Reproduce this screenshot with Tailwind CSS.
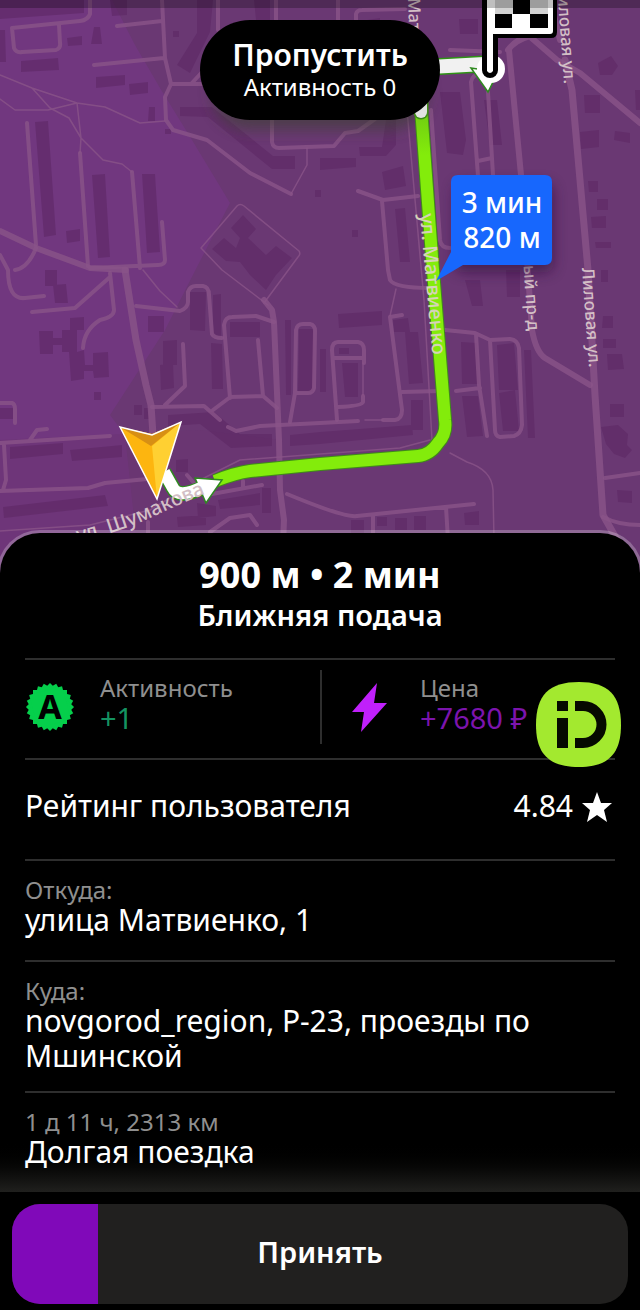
<!DOCTYPE html>
<html lang="ru">
<head>
  <meta charset="UTF-8" />
  <meta name="viewport" content="width=device-width, initial-scale=1.0"/>
  <title>Новый заказ</title>
  <script src="https://cdn.jsdelivr.net/npm/@tailwindcss/browser@4"></script>
</head>
<body class="bg-black text-white font-['Noto_Sans',sans-serif] min-h-screen flex flex-col">

  <!-- Map -->
  <header class="relative h-[573px] overflow-hidden bg-[#6a3873]">
    <svg class="absolute inset-0 w-full h-full" viewBox="0 0 640 573" preserveAspectRatio="xMidYMin slice" font-family="Noto Sans, sans-serif" role="img" aria-label="Карта маршрута">
      <defs>
        <path id="shumakova" d="M78 542 Q125 530 150 518 Q180 504 210 492" />
        <linearGradient id="routeFade" x1="0" y1="110" x2="0" y2="200" gradientUnits="userSpaceOnUse">
          <stop offset="0" stop-color="#6fcb12" />
          <stop offset="0.5" stop-color="#83ec0b" />
        </linearGradient>
        <filter id="soft" x="-30%" y="-30%" width="160%" height="170%"><feGaussianBlur stdDeviation="7" /></filter>
      </defs>
      <rect width="640" height="573" fill="#6a3873" />
      <path d="M0 0 H112 L135 45 L160 88 L192 140 L230 203 L198 265 L165 330 L110 415 L125 435 L140 573 H0 Z" fill="#71377f" />
      <path d="M0 440 L200 430 L280 440 V573 H0 Z" fill="#69336f" opacity="0.35" />

      <!-- Buildings -->
      <g fill="#5c2663" opacity="0.55">
        <path d="M0 0 H84 V13 L0 19 Z" />
        <path d="M0 30 H5 L6 62 H0 Z M67 38 L82 36 V45 L68 46 Z M94 27 H100 L102 44 H91 Z M21 61 L58 58 L59 70 L21 72 Z M96 77 L125 75 V85 L96 88 Z M129 84 L148 82 V93 L130 95 Z M149 107 H155 V121 H148 Z M110 0 H127 V15 L112 16 Z" />
        <path d="M35 122 L48 121 L56 235 L44 237 Z M92 175 L105 174 L110 257 L98 258 Z M142 174 L155 174 L160 252 L147 253 Z M66 231 L80 229 V241 L67 243 Z" />
        <path d="M173 31 H179 V37 H173 Z M165 129 H171 V134 H165 Z M197 0 H213 L210 32 L190 73 L177 65 L197 33 Z M254 0 H270 V20 H256 Z M180 107 H212 L273 156 H295 V169 H272 L208 117 L180 116 Z M315 190 H321 V197 H315 Z" />
        <path d="M243 215 L256 229 L248 238 L266 255 L276 246 L292 258 L276 275 L266 290 L250 275 L240 262 L226 261 L212 249 L224 238 L236 248 L240 238 L231 228 Z" />
        <path d="M45 270 H57 V286 H45 Z M53 285 L66 284 L68 303 H55 Z M39 331 H53 V338 H62 V330 H70 V318 L84 317 V330 H77 V352 L84 350 L85 365 H93 V353 L108 352 L109 377 L94 378 L93 371 H84 V379 L71 381 L69 352 H62 V345 H53 V354 H40 Z M94 392 H101 V400 H94 Z M0 408 H13 V419 H0 Z" />
        <path d="M148 316 H164 V332 H148 Z M163 341 L177 340 V365 H163 Z M160 365 L173 363 L174 388 L161 390 Z M190 292 H206 L205 331 L190 330 Z M213 295 L221 294 V338 L213 337 Z M211 343 L222 344 L223 389 H212 Z M230 322 H260 V337 H230 Z M285 320 H291 V395 H286 Z M299 329 H314 L313 392 H298 Z M134 405 H142 V415 H134 Z M144 408 H149 V419 H144 Z" />
        <path d="M10 447 L63 443 V454 L10 459 Z M70 450 L122 445 V457 L72 461 Z M176 460 L188 459 V472 H176 Z M168 415 L214 412 L240 434 H272 V446 L231 448 L200 424 L168 426 Z M290 435 L320 432 L412 425 L413 435 L320 444 L290 446 Z M3 507 L105 495 L108 506 L4 518 Z M218 500 L260 493 V505 L220 509 Z M177 517 L206 515 V525 L178 527 Z M197 503 L216 506 V516 L198 518 Z M262 488 H271 V513 H262 Z" />
        <path d="M367 20 L380 18 V32 L368 33 Z M459 19 H478 V34 H460 Z M440 92 H460 L466 140 L463 155 L447 153 Z M484 100 H497 L502 145 H490 Z M320 158 H356 V167 L320 170 Z M359 147 H382 L386 120 H396 V145 L386 156 H360 Z M382 172 L403 166 L406 186 L385 190 Z M352 230 H358 V237 H352 Z" />
        <path d="M395 209 L405 208 L410 262 H400 Z M580 132 L599 130 V147 L581 149 Z M615 131 L630 133 V143 L614 140 Z M584 95 H600 V113 H585 Z M598 63 L611 56 L618 66 L612 75 H600 Z M588 181 H598 V192 H589 Z M597 199 H608 V210 H597 Z M591 217 L606 216 V228 H592 Z M595 242 H611 V248 H596 Z M601 270 H608 V282 H601 Z M603 316 H613 V328 H602 Z M603 339 H616 V348 H603 Z M607 354 L622 354 L624 369 L608 370 Z M610 404 H624 V417 H610 Z M601 427 L618 425 L628 434 L627 445 L632 450 L625 458 L614 454 L606 444 Z M617 490 L632 491 V503 L618 502 Z M635 90 H640 V110 H636 Z" />
        <path d="M338 314 L382 311 V325 L339 328 Z M393 320 L408 318 L410 332 H394 Z M405 332 H418 L423 383 L409 384 Z M339 348 H349 V354 H339 Z M342 363 H358 V397 H345 Z M320 349 H326 V392 H320 Z M411 400 H423 V430 H411 Z M461 342 L477 343 L479 384 H462 Z M497 345 L514 343 L518 390 H499 Z M462 396 H478 L483 436 L467 437 Z M499 393 L515 390 L519 431 H503 Z M524 350 H531 L535 438 H528 Z M465 280 H480 L483 306 H472 Z M506 270 H520 V297 H507 Z M351 520 H364 V533 H351 Z M377 517 H387 V526 H377 Z M395 518 H407 V530 H395 Z M414 516 H426 V530 H414 Z M464 513 L479 511 V525 H465 Z" />
      </g>

      <!-- Streets -->
      <g fill="none" stroke="#8a5488" stroke-opacity="0.8" stroke-width="4" stroke-linejoin="round" stroke-linecap="round">
        <path d="M90 0 V14 Q88 20 80 21 L12 28 L14 48 Q16 53 22 52 L56 50 Q61 48 60 43 L59 25 M117 26 L162 21 M94 65 L164 58 M162 0 L165 58 L171 84 L165 97 L166 120 L173 130 L207 140 L250 173 L291 194 M171 84 H230 M191 84 L204 70 M218 0 V30 M276 0 V30" />
        <path d="M27 123 L36 245 M80 153 L88 266 M132 172 L140 268 M162 222 L165 260 Q165 265 158 265 L90 268 M36 248 Q28 268 15 270 M0 255 L8 270 Q8 300 25 298 L44 296" />
        <path d="M272 110 V142 Q273 148 279 148 L334 146 L345 133 L358 131 L375 119" />
        <path d="M110 273 L114 310 Q114 317 100 320 Q84 330 83 348 M110 277 L75 308 L32 312 M136 306 L180 311 Q188 308 188 302 V292 Q190 286 196 286 H203 Q209 287 209 295 L212 334 Q214 338 222 338" />
        <path d="M230 398 L224 325 Q225 317 232 317 L256 316 L274 322 M230 397 L263 396 L258 340 M263 396 L277 408 M213 410 L229 398 M183 344 L185 386 L165 405 M152 407 L204 406 L220 420 M228 427 L236 431 L260 426 L320 423 L358 421" />
        <path d="M290 422 L295 393 L296 330 Q297 324 303 324 H310 Q315 325 315 331 L314 388 Q313 393 308 393 H295 M0 443 L110 436 M30 440 L37 430 L47 429 M0 403 H12 Q15 404 15 409 V423 M4 445 L6 480 L3 490 M0 491 L88 488 L105 483 L158 478 M187 475 L193 482 M212 494 L262 485 M243 481 V488 M210 532 L230 518 L250 515 L257 525 M287 494 Q345 518 357 516 L474 504 M373 516 V540 M446 507 L448 540 M148 522 V545" />
        <path d="M338 0 V25 M356 25 V14 Q357 10 362 10 L405 9 M450 50 L500 52 M478 176 L471 82 Q472 74 482 74 M478 161 L492 158 M488 92 L493 175 M358 191 L383 200 L418 196 M382 201 L388 270 L390 280 Q395 288 430 288 M431 110 L440 240 Q441 248 450 248" />
        <path d="M402 315 L390 317 L402 410 Q402 419 395 420 L383 420 M402 392 L440 391 M445 330 L475 333 L490 340 L510 339 Q518 340 519 348 L522 425 Q521 434 514 436 L500 437 Q495 436 495 430 L490 340 M476 334 L479 385 L487 436 M456 391 L480 388 M337 420 L332 350 Q332 342 338 342 H358 Q364 343 364 350 V363 M333 358 H363 M363 396 V402 Q362 406 338 407 M605 478 L640 473 M603 517 Q618 525 640 525" />
        <path stroke-width="6" d="M0 231 L36 248 L90 268 L126 270 M264 300 L272 310 L274 322 L279 440 L280 490 L284 520 L283 545 M508 50 Q515 40 530 36 M509 50 L521 175 L532 330 Q536 352 545 358 L590 385 M520 28 L557 60 L580 73 L640 123 M550 0 L560 40" />
        <path stroke-width="7" d="M125 270 L136 340 L146 385 L151 405 L153 435 M565 60 L572 90 L588 270 L595 395 L603 515 L620 545" />
        <path stroke-width="1.5" d="M0 75 L32 88 L77 103 L105 107 L140 123 L165 121 M0 99 L15 110 H48 L77 103 M32 88 L50 108 L69 118 L81 138 L103 160 L122 164 L132 172 M77 103 L81 138 L80 153 M307 148 V165 L291 194 M143 270 L160 291 L177 307 M237 206 Q240 203 244 206 L299 251 Q301 254 298 257 L264 303 M237 206 L201 248 L222 270 L268 305 M0 531 L90 525 L150 510 L200 480 L240 460 L400 448 L430 440 M407 110 L424 300 L432 440 M396 289 L390 316 M363 363 V395 M365 420 H383 M450 453 L467 462 Q492 470 493 490 L494 540" />
      </g>

      <!-- Shadow under the skip button -->
      <rect x="212" y="55" width="216" height="75" rx="37" fill="#3b4030" opacity="0.6" filter="url(#soft)" />

      <!-- Route -->
      <g fill="none" stroke-linejoin="round">
        <path d="M421 108 L433 270 L445 420 Q447 434 438 443 Q430 455 418 456 L320 464 L250 471 Q235 473 215 481" stroke="#3f8d17" stroke-width="14" />
        <path d="M421 108 L433 270 L445 420 Q447 434 438 443 Q430 455 418 456 L320 464 L250 471 Q235 473 215 481" stroke="url(#routeFade)" stroke-width="12" />
        <path d="M421 90 V112" stroke="#3f8d17" stroke-width="15" stroke-linecap="round" />
        <path d="M421 90 V112" stroke="#e2e2e2" stroke-width="12" stroke-linecap="round" />
        <path d="M430 67 L484 64" stroke="#2f9316" stroke-width="17" />
        <path d="M430 67 L484 64" stroke="#f1f1f1" stroke-width="14" />
        <path d="M164 472 L173 488 Q178 499 202 488" stroke="#2f8a20" stroke-width="15" />
      </g>
      <path d="M195 478 L222 480 L206 503 Z M471 68 L488 92 L498 72 Z" fill="#fff" stroke="#2f8a20" stroke-width="1.5" />
      <path d="M164 472 L173 488 Q178 499 203 487" fill="none" stroke="#fff" stroke-width="12" />

      <!-- Street names -->
      <g fill="#d3bfc6" font-size="17" font-weight="500">
        <text transform="translate(420 214) rotate(85)" font-size="20" fill="#d5d3b8">ул. Матвиенко</text>
        <text transform="translate(408 -2) rotate(88)">Матвиенко</text>
        <text transform="translate(564 84) rotate(86)" text-anchor="end">Лиловая ул.</text>
        <text transform="translate(582 268) rotate(86)">Лиловая ул.</text>
        <text transform="translate(528 331) rotate(86)" text-anchor="end">вый пр-д</text>
        <text font-size="20"><textPath href="#shumakova">ул. Шумакова</textPath></text>
      </g>

      <!-- Finish flag -->
      <circle cx="491" cy="69" r="14" fill="#fff" />
      <path d="M490 -5 V70" stroke="#000" stroke-width="16" stroke-linecap="round" />
      <path d="M482 -5 H557 V32 Q557 38 551 38 H482 Z" fill="#000" />
      <path d="M487 -5 H553 V31 Q553 34 550 34 H493 V71 Q490 75 487 71 Z" fill="#fff" />
      <path d="M513 0 H530 V14 H513 Z M495 14 H512 V28 H495 Z M530 14 H548 V28 H530 Z" fill="#000" />
      <path d="M495 0 H513 V14 H495 Z M530 0 H548 V14 H530 Z" fill="#d2d2d2" />

      <!-- Current position -->
      <path d="M120 427 L152 434 L181 422 L157 499 Z" fill="#fdb50f" />
      <path d="M152 446 L181 422 L157 499 Z" fill="#ffd032" />
      <path d="M120 427 L152 434 L181 422 L151 446 Z" fill="#d78f14" />
      <path d="M120 427 L152 435 L181 422 L157 499 Z" fill="none" stroke="#fff" stroke-width="1.5" />

      <!-- Time and distance -->
      <rect x="455" y="184" width="98" height="88" rx="8" fill="#2c1038" opacity="0.6" filter="url(#soft)" />
      <path d="M458 175 H545 Q552 175 552 182 V258 Q552 265 545 265 H463 L436 281 L451 252 V182 Q451 175 458 175 Z" fill="#1767fd" />
      <g fill="#fff" font-size="28" font-weight="500" text-anchor="middle">
        <text x="502" y="213">3 мин</text>
        <text x="502" y="248">820 м</text>
      </g>
      <rect width="640" height="8" fill="#000" opacity="0.25" />
    </svg>

    <button class="absolute top-5 left-1/2 -translate-x-1/2 w-60 h-25 pb-0.5 rounded-full bg-black flex flex-col items-center justify-center">
      <span class="text-[30px] leading-9 font-semibold">Пропустить</span>
      <span class="text-[24px] leading-7">Активность 0</span>
    </button>
  </header>

  <!-- Order sheet -->
  <main class="relative -mt-10 flex-1 rounded-t-[40px] bg-black ring-3 ring-white/25 px-[25px] pt-[22px] bg-linear-to-t from-[#20201e] via-black via-8% to-black">
    <div class="h-[103px] text-center">
      <h1 class="text-[36px] leading-10 font-bold">900 м • 2 мин</h1>
      <h2 class="text-[29px] leading-10 font-semibold">Ближняя подача</h2>
    </div>

    <section class="relative h-25 border-t-2 border-[#2e2e2e] grid grid-cols-2 pt-2.5 pb-3.5">
      <div class="flex items-center">
        <svg class="w-[50px] shrink-0" viewBox="-25 -25 50 50" aria-hidden="true">
          <g fill="#05cf4b">
            <rect x="-17" y="-17" width="34" height="34" />
            <rect x="-17" y="-17" width="34" height="34" transform="rotate(15)" />
            <rect x="-17" y="-17" width="34" height="34" transform="rotate(30)" />
            <rect x="-17" y="-17" width="34" height="34" transform="rotate(45)" />
            <rect x="-17" y="-17" width="34" height="34" transform="rotate(60)" />
            <rect x="-17" y="-17" width="34" height="34" transform="rotate(75)" />
          </g>
          <text y="12" text-anchor="middle" font-family="Noto Sans, sans-serif" font-size="34" font-weight="700">А</text>
        </svg>
        <div class="ml-[25px] pb-2">
          <p class="text-[24px] leading-[30px] text-[#8f8f8f]">Активность</p>
          <p class="text-[29px] leading-[30px] text-[#149361]">+1</p>
        </div>
      </div>
      <div class="flex items-center border-l-2 border-[#2e2e2e]">
        <svg class="w-[50px] ml-[23px] shrink-0" viewBox="0 0 50 50" aria-hidden="true">
          <path d="M32 1 L7 30 H19 L16 50 L42 21 H29 Z" fill="#c020fb" />
        </svg>
        <div class="ml-[25px] pb-2">
          <p class="text-[24px] leading-[30px] text-[#8f8f8f]">Цена</p>
          <p class="text-[29px] leading-[30px] text-[#7c14ad] whitespace-nowrap">+7680 ₽</p>
        </div>
      </div>
      <svg class="absolute -right-1.5 top-[22px] w-[85px]" viewBox="0 0 85 85" aria-label="iD">
        <path d="M43 0 C72 0 85 13 85 43 C85 72 72 85 43 85 C13 85 0 72 0 43 C0 13 13 0 43 0 Z" fill="#a3e92f" />
        <path d="M21 19 H32 V29 H21 Z M21 36 H32 V66 H21 Z" fill="#060a00" />
        <path d="M39 24 H47 A18.500 18.500 0 0 1 47 61 H39" fill="none" stroke="#060a00" stroke-width="10" />
      </svg>
    </section>

    <section class="h-[101px] border-t-2 border-[#2e2e2e] flex items-center justify-between pb-2">
      <p class="text-[30px] leading-[35px]">Рейтинг пользователя</p>
      <p class="text-[30px] leading-[35px] flex items-center gap-1.5">4.84
        <svg class="w-9 h-9" viewBox="0 0 36 36" aria-hidden="true">
          <path d="M18 4 L22 15 L33 15 L25 22 L28 34 L18 27 L8 34 L11 22 L3 15 L14 15 Z" fill="#fff" />
        </svg>
      </p>
    </section>

    <section class="h-[101px] border-t-2 border-[#2e2e2e] pt-[17px]">
      <p class="text-[24px] leading-6 text-[#8f8f8f]">Откуда:</p>
      <p class="text-[30px] leading-[35px]">улица Матвиенко, 1</p>
    </section>

    <section class="h-[131px] border-t-2 border-[#2e2e2e] pt-[17px]">
      <p class="text-[24px] leading-6 text-[#8f8f8f]">Куда:</p>
      <p class="text-[30px] leading-[35px]">novgorod_region, Р-23, проезды по Мшинской</p>
    </section>

    <section class="h-[101px] border-t-2 border-[#2e2e2e] pt-[17px]">
      <p class="text-[24px] leading-6 text-[#8f8f8f]">1 д 11 ч, 2313 км</p>
      <p class="text-[30px] leading-[35px]">Долгая поездка</p>
    </section>
  </main>

  <!-- Accept -->
  <footer class="relative bg-black px-3 pt-3 pb-1.5">
    <button class="relative w-full h-25 pb-1 rounded-[28px] overflow-hidden bg-[#21201f] text-[29px] font-semibold">
      <span class="absolute inset-y-0 left-0 bg-[#8009b9]" style="width: 14%"></span>
      <span class="relative">Принять</span>
    </button>
  </footer>

</body>
</html>
